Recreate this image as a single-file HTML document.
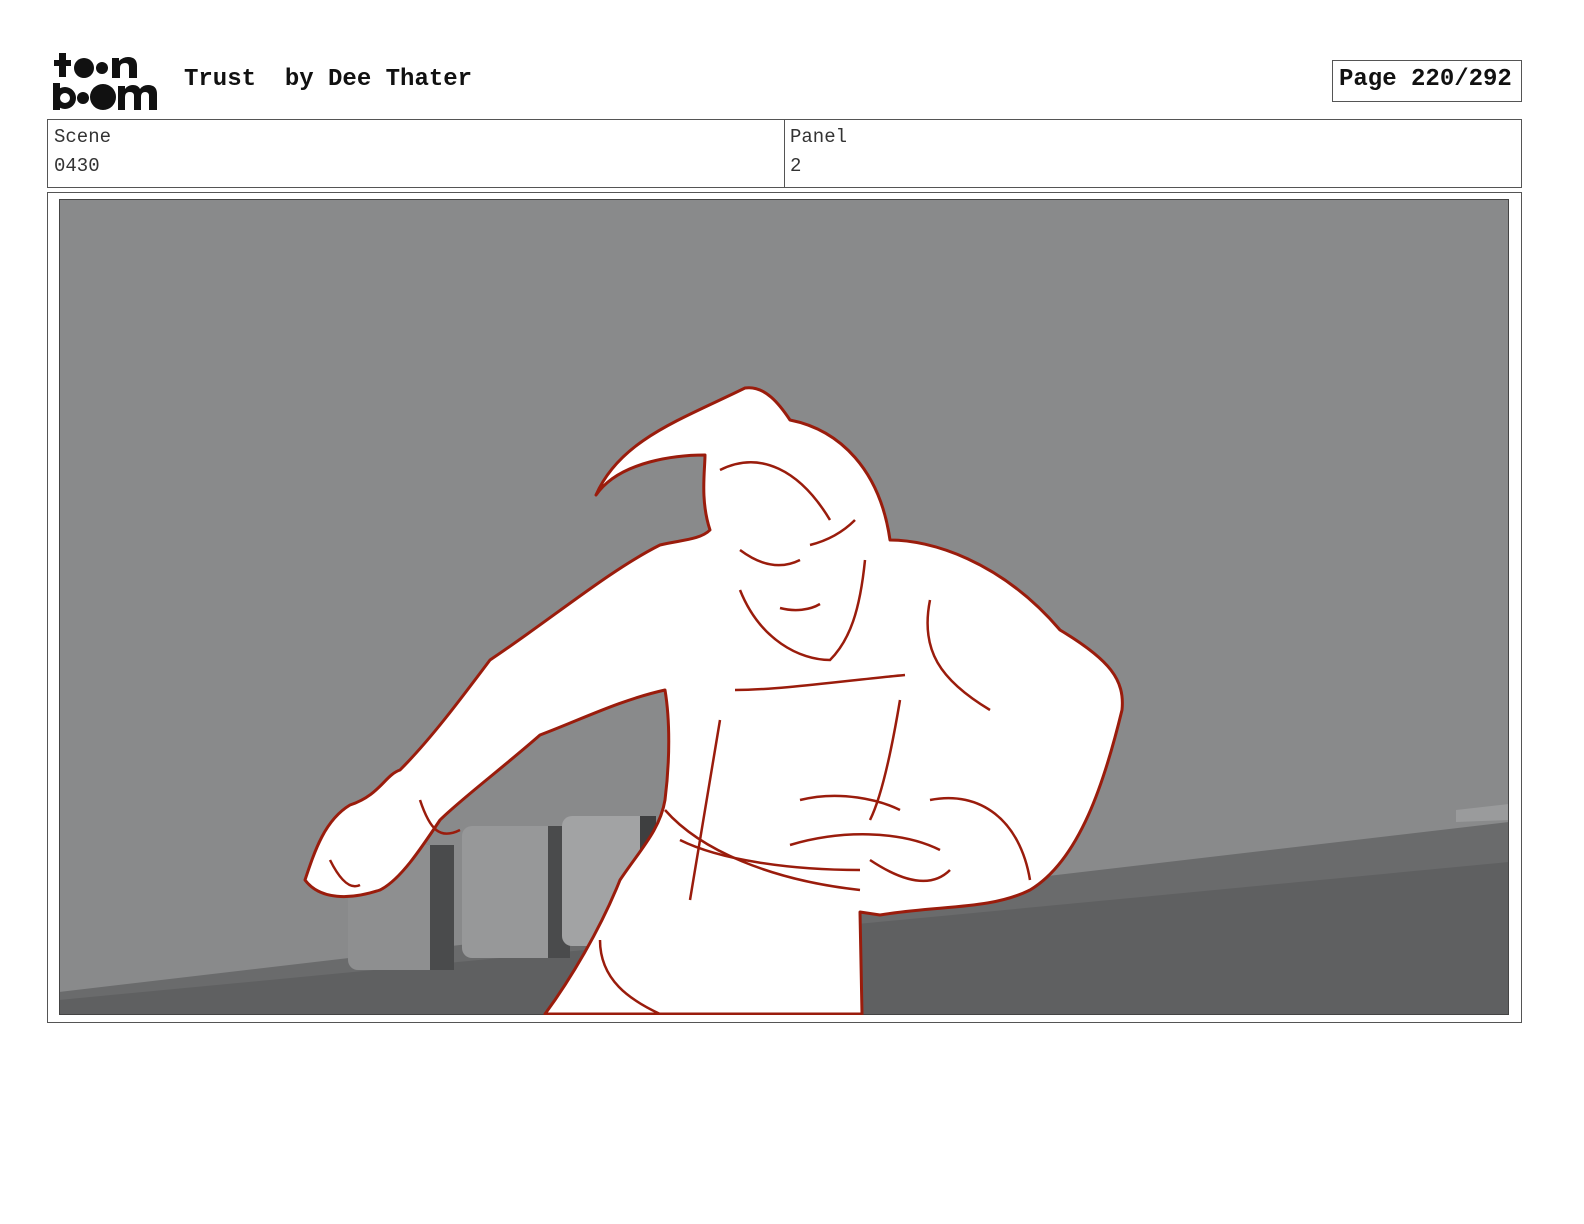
<!DOCTYPE html>
<html><head><meta charset="utf-8"><style>
body{margin:0;background:#fff;width:1584px;height:1224px;position:relative;overflow:hidden;font-family:"Liberation Mono",monospace}
.t{position:absolute;font-weight:bold;font-size:24px;color:#111}
.box{position:absolute;border:1px solid #555}
.lbl{position:absolute;font-size:19px;color:#333}
</style></head><body>
<svg style="position:absolute;left:50px;top:50px" width="115" height="62" viewBox="0 0 115 62">
<g fill="#111">
<rect x="9" y="3" width="7" height="24"/><rect x="4" y="10" width="17" height="6"/>
<circle cx="34" cy="18" r="10"/><circle cx="52" cy="18" r="6"/>
<path d="M62 8h7v3q4-4 9-4q9 0 9 9v12h-8v-11q0-4-4-4q-5 0-5 5v10h-8z"/>
<rect x="3" y="33" width="7" height="27"/><circle cx="15" cy="48" r="11"/><circle cx="15" cy="48" r="5" fill="#fff"/>
<circle cx="33" cy="48" r="6"/><circle cx="53" cy="47" r="13"/>
<path d="M68 36h7v3q3-4 8-4q5 0 7 4q3-4 8-4q9 0 9 9v16h-8v-14q0-4-4-4q-4 0-4 5v13h-7v-14q0-4-4-4q-5 0-5 5v13h-7z"/>
</g></svg>
<div class="t" style="left:184px;top:66px">Trust&nbsp; by Dee Thater</div>
<div class="box" style="left:1332px;top:60px;width:188px;height:40px"></div>
<div class="t" style="left:1339px;top:66px">Page 220/292</div>
<div class="box" style="left:47px;top:119px;width:1473px;height:67px"></div>
<div style="position:absolute;left:784px;top:119px;width:1px;height:68px;background:#555"></div>
<div class="lbl" style="left:54px;top:126px">Scene</div>
<div class="lbl" style="left:54px;top:155px">0430</div>
<div class="lbl" style="left:790px;top:126px">Panel</div>
<div class="lbl" style="left:790px;top:155px">2</div>
<div class="box" style="left:47px;top:192px;width:1473px;height:829px"></div>
<svg style="position:absolute;left:59px;top:199px" width="1450" height="816" viewBox="59 199 1450 816">
<rect x="59" y="199" width="1450" height="816" fill="#898a8b"/>
<polygon points="59,992 1509,822 1509,1015 59,1015" fill="#6a6b6c"/>
<polygon points="59,1000 1509,862 1509,1015 59,1015" fill="#5f6061"/>
<polygon points="1456,810 1509,804 1509,820 1456,822" fill="#9a9b9c"/>
<rect x="348" y="845" width="106" height="125" rx="10" fill="#8e8f90"/>
<rect x="430" y="845" width="24" height="125" fill="#4a4b4c"/>
<rect x="462" y="826" width="108" height="132" rx="10" fill="#979899"/>
<rect x="548" y="826" width="22" height="132" fill="#4a4b4c"/>
<rect x="562" y="816" width="94" height="130" rx="10" fill="#a2a3a4"/>
<rect x="640" y="816" width="16" height="130" fill="#3e3f40"/>
<rect x="59" y="199" width="1450" height="816" fill="none" stroke="#444" stroke-width="2"/>
<path fill="#fff" stroke="#9a1c0c" stroke-width="3" stroke-linejoin="round" d="M596,495 C620,440 680,420 745,388 C765,385 780,405 790,420 C840,430 880,470 890,540 C930,540 1000,560 1060,630 C1110,660 1125,680 1122,710 C1105,780 1080,860 1030,890 C990,910 940,905 880,915 L860,912 L862,1014 L545,1014 C570,980 600,930 620,880 C640,850 660,830 665,800 C670,760 670,720 665,690 C620,700 580,720 540,735 C500,770 460,800 440,820 C420,850 400,880 380,890 C350,900 320,900 305,880 C315,850 325,820 350,805 C380,795 385,775 400,770 C430,740 460,700 490,660 C550,620 610,570 660,545 C680,540 700,540 710,530 C700,500 705,470 705,455 C680,455 620,460 596,495 Z"/>
<g fill="none" stroke="#9a1c0c" stroke-width="2.5">
<path d="M720,470 C760,450 800,470 830,520"/>
<path d="M740,550 C760,565 780,570 800,560"/><path d="M810,545 C830,540 845,530 855,520"/>
<path d="M780,608 C795,612 810,610 820,604"/>
<path d="M740,590 C760,640 800,660 830,660 C850,640 860,610 865,560"/>
<path d="M735,690 C780,690 850,680 905,675"/>
<path d="M680,840 C720,860 790,870 860,870"/>
<path d="M665,810 C700,850 770,880 860,890"/>
<path d="M800,800 C840,790 880,800 900,810"/><path d="M790,845 C840,830 900,830 940,850"/>
<path d="M870,860 C900,880 930,890 950,870"/><path d="M930,800 C980,790 1020,820 1030,880"/>
<path d="M720,720 C710,780 700,840 690,900"/><path d="M900,700 C890,760 880,800 870,820"/>
<path d="M930,600 C920,650 940,680 990,710"/><path d="M600,940 C600,980 630,1000 660,1014"/>
<path d="M420,800 C430,830 440,840 460,830"/><path d="M330,860 C340,880 350,890 360,885"/>
</g>
</svg>
</body></html>
